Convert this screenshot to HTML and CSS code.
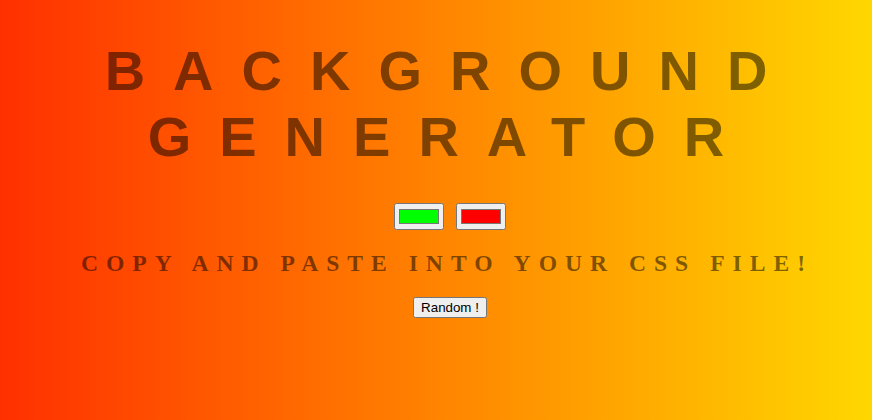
FILE: index.html
```html
<!DOCTYPE html>
<html>
<head>
<meta charset="utf-8">
<title>Background Generator</title>
<link rel="stylesheet" href="styles.css">
</head>
<body>
<h1 class="title">Background Generator</h1>
<div class="pickers">
<input class="color1" type="color" name="color1" value="#00ff00">
<input class="color2" type="color" name="color2" value="#ff0000">
</div>
<h3 class="css-text">Copy and paste into your css file!</h3>
<button class="random">Random !</button>
</body>
</html>
```
FILE: styles.css
```css
html, body {
  height: 100%;
}
body {
  margin: 0;
  padding: 8px 8px 8px 36px;
  box-sizing: border-box;
  font-family: "Liberation Sans", Arial, sans-serif;
  color: rgba(0, 0, 0, 0.5);
  text-align: center;
  text-transform: uppercase;
  letter-spacing: 0.5em;
  background: linear-gradient(to right, #ff3000, #ffd700);
}
.title {
  font: bold 56px/66px "Liberation Sans", Arial, sans-serif;
  letter-spacing: 0.5em;
  margin: 30px 0 0;
}
.pickers {
  margin-top: 33px;
  line-height: 16px;
}
.pickers input {
  vertical-align: middle;
}
.css-text {
  font-family: "Liberation Serif", "Times New Roman", serif;
  font-size: 23.6px;
  font-weight: bold;
  margin: 20px 0 20px -6px;
}
.random {
  text-transform: none;
  letter-spacing: normal;
  font-family: "Liberation Sans", Arial, sans-serif;
}
```
